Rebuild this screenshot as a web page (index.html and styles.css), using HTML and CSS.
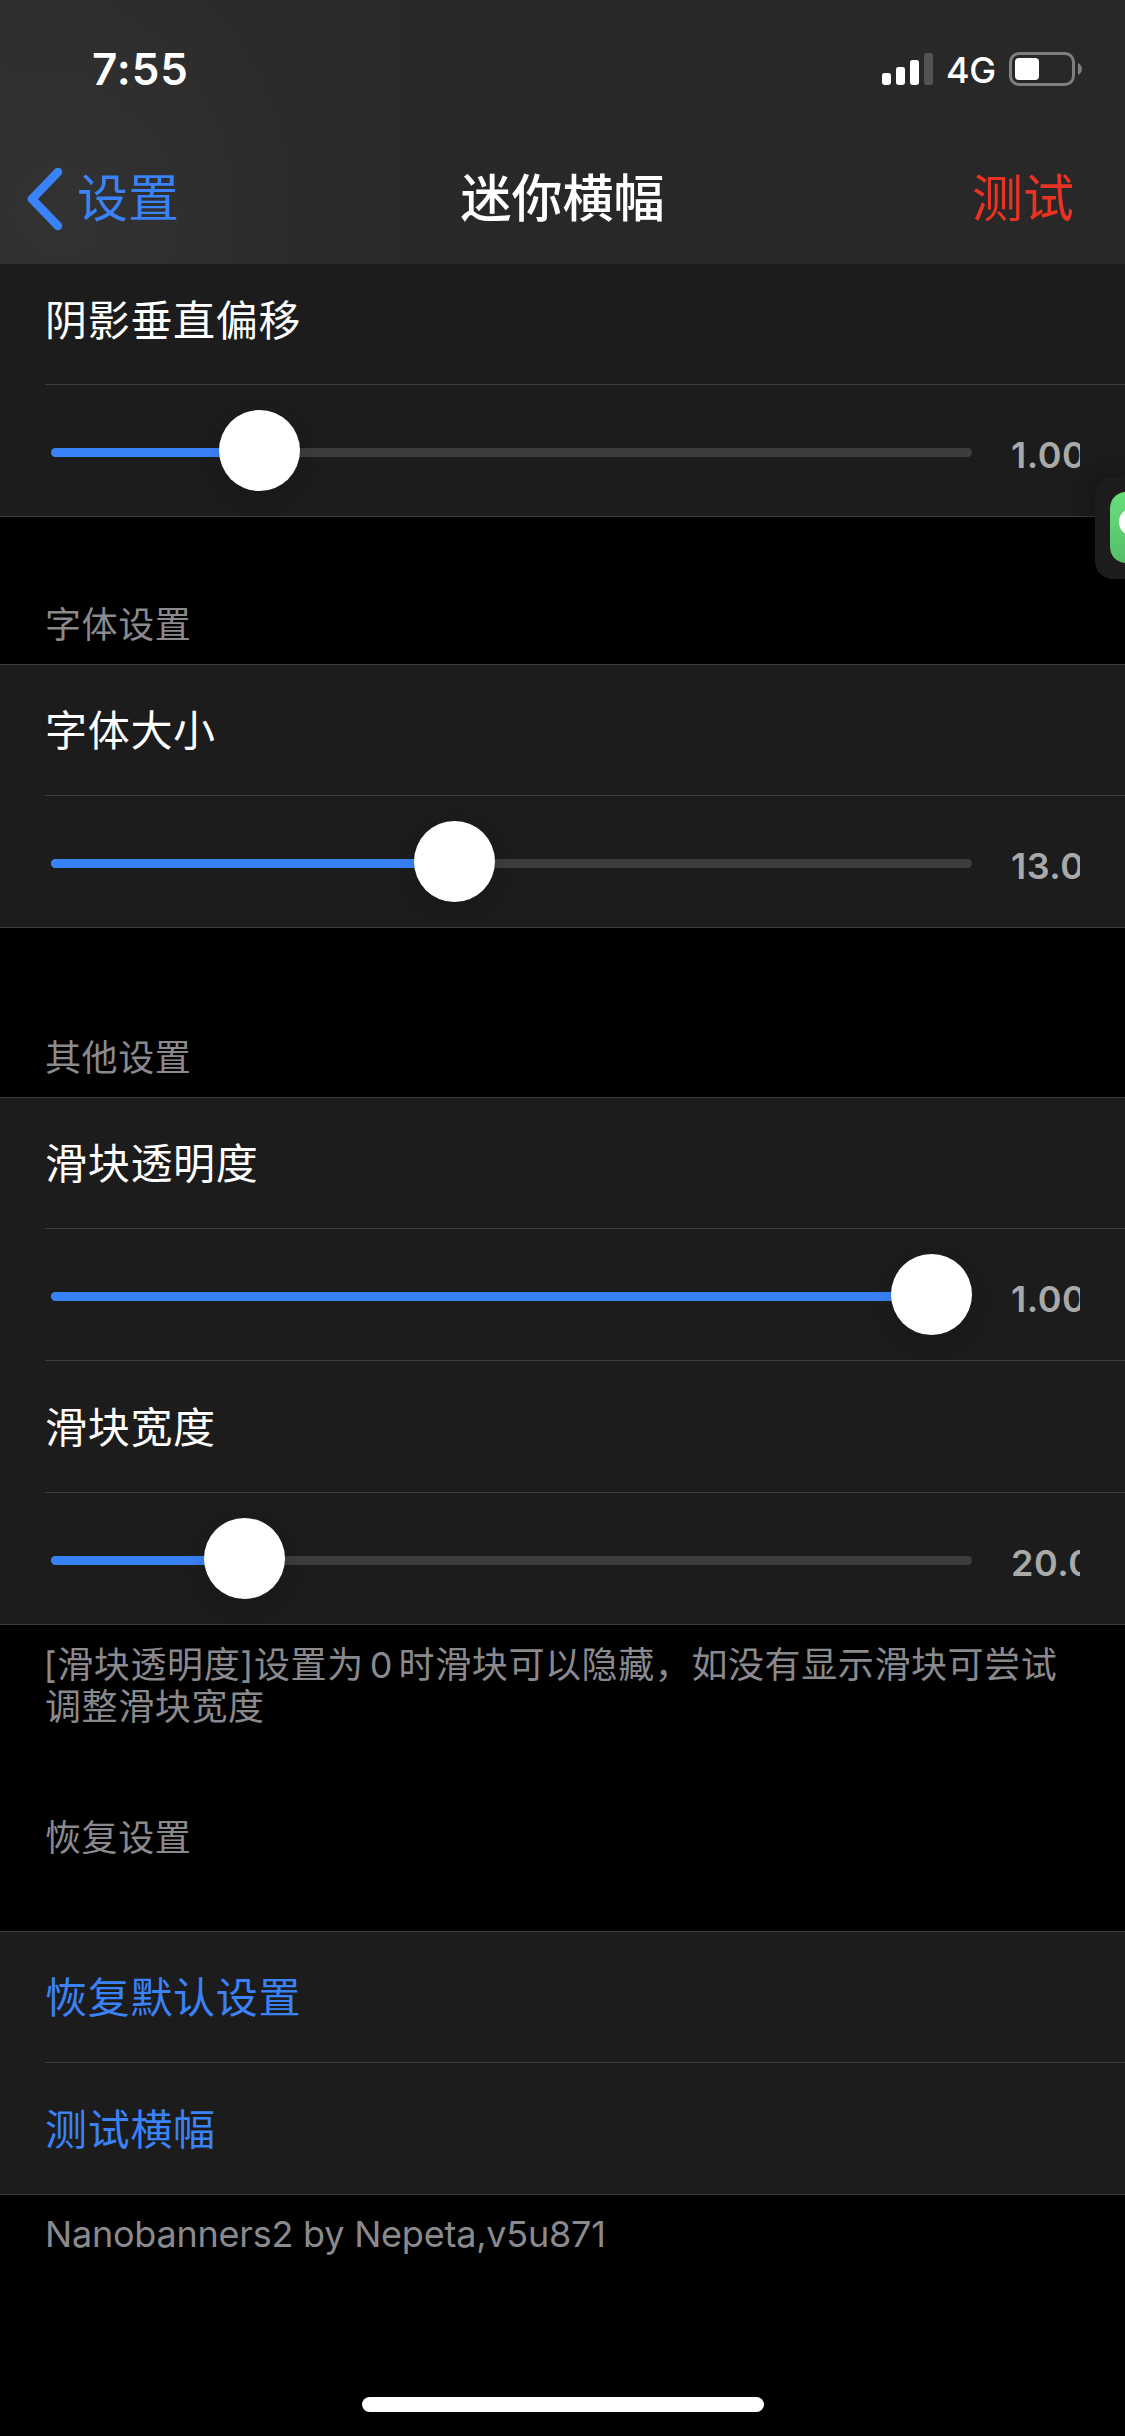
FILE: index.html
```html
<!DOCTYPE html>
<html lang="zh-CN">
<head>
<meta charset="utf-8">
<title>迷你横幅</title>
<link rel="stylesheet" href="styles.css">
</head>
<body>
<div class="screen">
  <header class="top">
    <div class="status">
      <span class="time">7:55</span>
      <div class="status-icons">
        <svg class="signal" width="51" height="32" viewBox="0 0 51 32" fill="#fff">
          <rect x="0" y="20" width="9" height="12" rx="2.4"/>
          <rect x="14" y="14" width="9" height="18" rx="2.4"/>
          <rect x="28" y="7" width="9" height="25" rx="2.4"/>
          <rect x="42" y="0" width="9" height="32" rx="2.4" fill="#535353"/>
        </svg>
        <span class="network">4G</span>
        <svg class="battery" width="73" height="34" viewBox="0 0 73 34">
          <rect x="1.5" y="1.5" width="63" height="31" rx="8.5" fill="none" stroke="#7f7f7f" stroke-width="3"/>
          <rect x="6" y="6" width="24" height="22" rx="4" fill="#fff"/>
          <path d="M69 11a6.6 6.6 0 0 1 0 12z" fill="#7f7f7f"/>
        </svg>
      </div>
    </div>
    <nav class="nav">
      <a class="back">
        <svg width="38" height="64" viewBox="0 0 38 64" fill="none" stroke="#3a82f7" stroke-width="8.6" stroke-linecap="round" stroke-linejoin="round"><path d="M32 5 6 32l26 27"/></svg>
        <span class="back-label">设置</span>
      </a>
      <h1 class="title">迷你横幅</h1>
      <a class="action">测试</a>
    </nav>
  </header>

  <main class="list">
    <section class="group group-first">
      <div class="row label">阴影垂直偏移</div>
      <div class="row slider"><div class="track"><div class="fill" style="width:208.5px"></div><div class="thumb" style="left:168px"></div></div><span class="value">1.00</span></div>
    </section>

    <h2 class="heading heading-font">字体设置</h2>
    <section class="group">
      <div class="row label">字体大小</div>
      <div class="row slider"><div class="track"><div class="fill" style="width:403px"></div><div class="thumb" style="left:363px"></div></div><span class="value">13.0</span></div>
    </section>

    <h2 class="heading heading-other">其他设置</h2>
    <section class="group">
      <div class="row label">滑块透明度</div>
      <div class="row slider"><div class="track"><div class="fill" style="width:880px"></div><div class="thumb" style="left:840px"></div></div><span class="value">1.00</span></div>
      <div class="row label tall">滑块宽度</div>
      <div class="row slider"><div class="track"><div class="fill" style="width:193px"></div><div class="thumb" style="left:153px"></div></div><span class="value">20.0</span></div>
    </section>
    <p class="note"><span class="bracket">[</span>滑块透明度]设置为<span class="zero">0</span>时滑块可以隐藏，如没有显示滑块可尝试<br>调整滑块宽度</p>

    <h2 class="heading heading-reset">恢复设置</h2>
    <section class="group">
      <div class="row label link">恢复默认设置</div>
      <div class="row label link tall">测试横幅</div>
    </section>
    <p class="note credit">Nanobanners2 by Nepeta,v5u871</p>
  </main>

  <div class="floating">
    <svg width="15" height="71" viewBox="0 0 15 71">
      <defs><linearGradient id="g" x1="0" y1="0" x2="0" y2="1"><stop offset="0" stop-color="#68df7b"/><stop offset="1" stop-color="#57bd68"/></linearGradient></defs>
      <path d="M15 0C6 1 0 7 0 17V54C0 64 6 70 15 71Z" fill="url(#g)"/>
      <path d="M15 18.500C11 21 9 25 9 30C9 35 11 39 15 41.500Z" fill="#fff"/>
    </svg>
  </div>
  <div class="home"></div>
</div>
</body>
</html>
```
FILE: styles.css
```css
* { box-sizing: border-box; }
body {
  margin: 0;
  background: #000;
  color: #fff;
  font-family: Inter, "Noto Sans CJK SC", sans-serif;
}
.screen {
  position: relative;
  display: flex;
  flex-direction: column;
  width: 1125px;
  height: 2436px;
  overflow: hidden;
}
.top {
  height: 264px;
  background:
    radial-gradient(circle at 60px 210px, #323232 0, rgba(50, 50, 50, 0) 260px),
    linear-gradient(90deg, #2d2d2d 0, #282828 45%);
}
.status {
  display: flex;
  justify-content: space-between;
  height: 132px;
  padding: 0 43px 0 92px;
}
.time {
  padding-top: 42px;
  font-size: 44px;
  line-height: 54px;
  font-weight: 600;
  letter-spacing: 0.9px;
}
.status-icons { display: flex; align-items: flex-start; }
.signal { margin-top: 53px; }
.network {
  width: 50px;
  margin: 48px 13px 0 13px;
  font-size: 36px;
  line-height: 44px;
  font-weight: 500;
  letter-spacing: -0.5px;
}
.battery { margin-top: 52px; }
.nav {
  display: grid;
  grid-template-columns: 1fr auto 1fr;
  align-items: center;
  height: 132px;
  padding: 2px 51px 0 26px;
  font-size: 51px;
  line-height: 74px;
}
.back { display: flex; align-items: center; gap: 13px; color: #3a82f7; }
.title {
  margin: 0 0 0 25px;
  font-size: 51px;
  font-weight: 500;
}
.action { justify-self: end; color: #eb3323; }

.group {
  border-top: 1px solid #3d3d3f;
  border-bottom: 1px solid #3d3d3f;
  background: #1c1c1c;
}
.group-first { border-top: 0; }
.row { display: flex; align-items: center; }
.label {
  height: 130px;
  margin-left: 45px;
  padding-bottom: 5px;
  font-size: 42px;
  letter-spacing: 0.7px;
}
.label.tall { height: 132px; border-top: 1px solid #3d3d3f; }
.group-first .label { height: 120px; padding-bottom: 13px; }
.link { color: #3a82f7; }
.slider {
  height: 132px;
  margin-left: 45px;
  padding: 3px 45px 0 6px;
  border-top: 1px solid #3d3d3f;
}
.track {
  position: relative;
  width: 921px;
  height: 9px;
  border-radius: 5px;
  background: #3d3d3f;
}
.fill { height: 9px; border-radius: 5px; background: #3a82f7; }
.thumb {
  position: absolute;
  top: -38px;
  width: 81px;
  height: 81px;
  border-radius: 50%;
  background: #fff;
  box-shadow: 0 8px 24px rgba(0, 0, 0, 0.15);
}
.value {
  width: 69px;
  margin: 6px 0 0 39px;
  overflow: hidden;
  white-space: nowrap;
  color: #a9a9a9;
  font-size: 36px;
  line-height: 44px;
  font-weight: 600;
  letter-spacing: 0.5px;
}
.heading {
  margin: 0;
  padding-left: 45px;
  color: #8a8a8e;
  font-size: 36px;
  font-weight: 400;
  line-height: 52px;
  letter-spacing: 0.6px;
}
.heading-font { height: 147px; padding-top: 82px; }
.heading-other { height: 169px; padding-top: 104px; }
.heading-reset { height: 140px; padding-top: 21px; }
.note {
  height: 166px;
  margin: 0;
  padding: 19px 0 0 45px;
  color: #8a8a8e;
  font-size: 36px;
  line-height: 42px;
  letter-spacing: 0.6px;
  white-space: nowrap;
}
.bracket { margin-left: -1.5px; }
.zero { margin: 0 5.5px 0 6px; }
.credit { height: auto; padding-top: 18px; letter-spacing: -0.22px; }

.floating {
  position: absolute;
  top: 477px;
  right: 0;
  width: 30px;
  height: 102px;
  padding: 15px 0 0 15px;
  border-radius: 18px 0 0 18px;
  background: #1c1c1c;
  box-shadow: 0 0 24px rgba(0, 0, 0, 0.4);
}
.floating svg { display: block; }
.home {
  position: absolute;
  bottom: 24px;
  left: 362px;
  width: 402px;
  height: 15px;
  border-radius: 8px;
  background: #fff;
}
```
